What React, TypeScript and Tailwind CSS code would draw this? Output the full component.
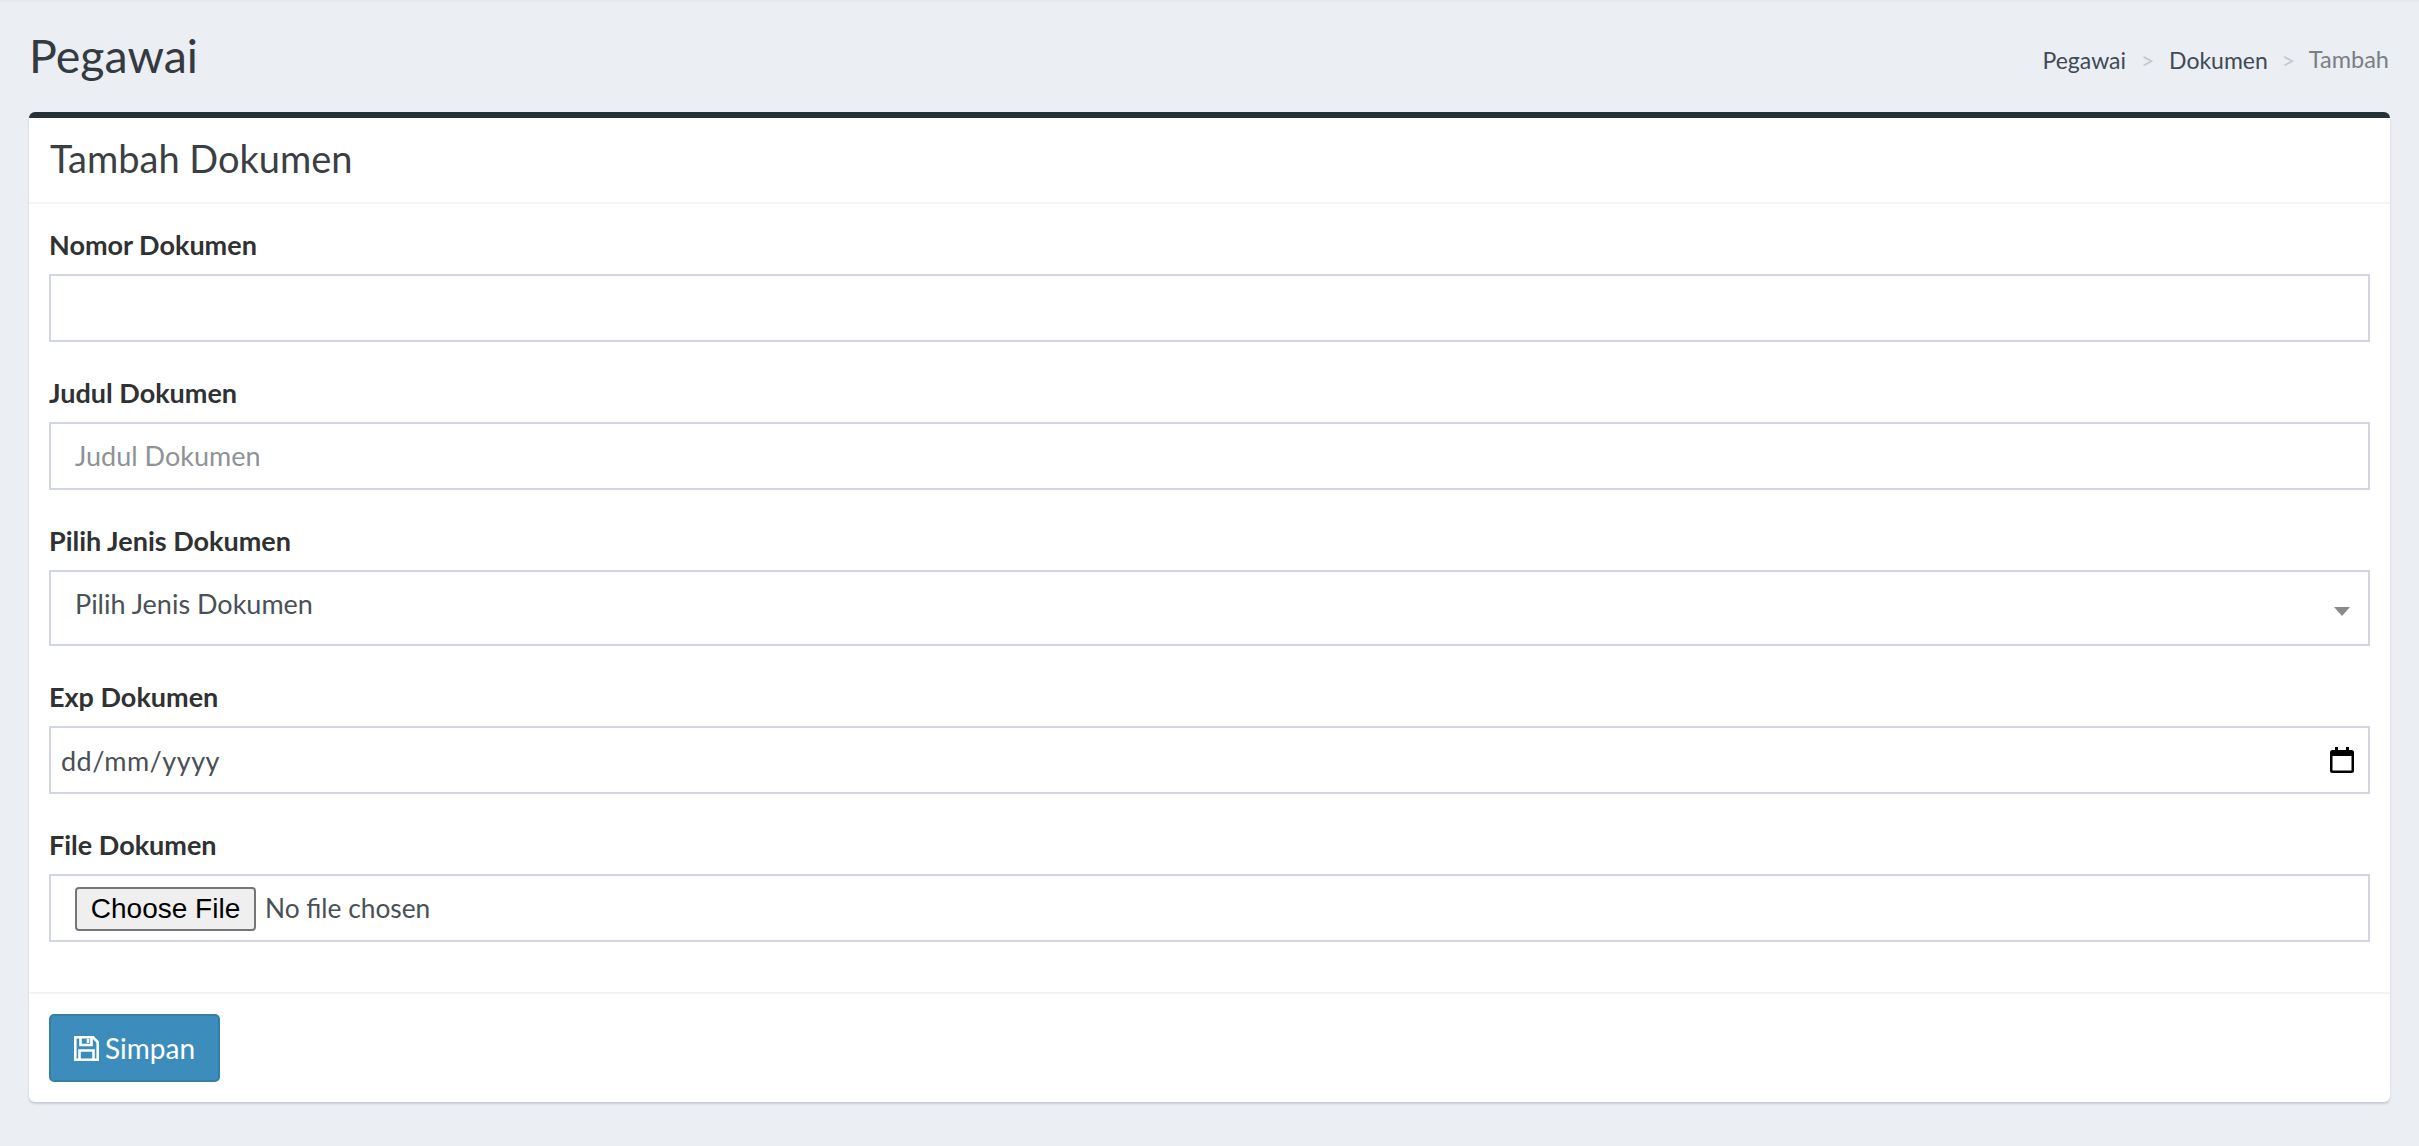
const fieldBox = 'w-full border-2 border-[#d2d6e0] bg-white'

function Label({ children }: { children: string }) {
  return <label className="block h-[36px] text-[27px] leading-[33px] font-bold text-[#2f3133]">{children}</label>
}

function SaveIcon() {
  return (
    <svg width="25" height="25" viewBox="0 0 25 25" fill="none" stroke="currentColor" strokeWidth="2.600">
      <path d="M1.300 1.300H19L23.700 6V23.700H1.300Z" />
      <path d="M6.500 1.300V9H17.500V1.300" />
      <path d="M14 3V7" />
      <path d="M5.500 23.700V14.500H19.500V23.700" />
    </svg>
  )
}

export default function App() {
  return (
    <div className="min-h-[1146px] bg-[#ebeef3] font-['Lato','Liberation_Sans',sans-serif]">
      <div className="h-[2px] bg-[#e6e8ec]" />
      <div className="px-[29px]">
        {/* Page heading */}
        <div className="flex h-[110px] items-center justify-between pb-[4px]">
          <h1 className="text-[46.500px] leading-none font-normal text-[#343a40]">Pegawai</h1>
          <ol className="flex items-center pt-[10px] pr-[1px] text-[23px] text-[#3f4a56]">
            <li>Pegawai</li>
            <li className="w-[43px] text-center text-[#c4c7cb]">&gt;</li>
            <li>Dokumen</li>
            <li className="w-[41px] text-center text-[#c4c7cb]">&gt;</li>
            <li className="text-[23.500px] text-[#7a7f85]">Tambah</li>
          </ol>
        </div>

        {/* Card */}
        <div className="h-[990px] rounded-[6px] border-t-[6px] border-[#263238] bg-white shadow-[0_2px_2px_rgba(120,130,150,0.3)]">
          <div className="flex h-[86px] items-center border-b-2 border-[#f3f4f6] px-[21px] pb-[4px]">
            <h3 className="text-[38px] leading-none font-normal text-[#3b3f44]">Tambah Dokumen</h3>
          </div>

          <form className="px-[20px] pt-[24px]">
            <Label>Nomor Dokumen</Label>
            <div className={`${fieldBox} mt-[10px] h-[68px]`} />

            <div className="mt-[34px]">
              <Label>Judul Dokumen</Label>
              <div className={`${fieldBox} mt-[10px] flex h-[68px] items-center px-[24px] text-[27px] text-[#8e9297]`}>Judul Dokumen</div>
            </div>

            <div className="mt-[34px]">
              <Label>Pilih Jenis Dokumen</Label>
              <div className={`${fieldBox} mt-[10px] flex h-[76px] items-center justify-between pb-[7px] pl-[24px] pr-[18px] text-[27px] text-[#495057]`}>
                <span>Pilih Jenis Dokumen</span>
                <span className="mt-[14px] h-0 w-0 border-x-[8px] border-t-[9px] border-x-transparent border-t-[#8a8a8a]" />
              </div>
            </div>

            <div className="mt-[34px]">
              <Label>Exp Dokumen</Label>
              <div className={`${fieldBox} mt-[10px] flex h-[68px] items-center justify-between pl-[10px] pr-[14px] text-[27px] tracking-[0.5px] text-[#495057]`}>
                <span className="pt-[2px]">dd/mm/yyyy</span>
                <svg width="24" height="26" viewBox="0 0 24 26">
                  <path d="M5 0h3v3h8V0h3v3h2.500A2.500 2.500 0 0 1 24 5.500v18a2.500 2.500 0 0 1-2.500 2.500h-19A2.500 2.500 0 0 1 0 23.500v-18A2.500 2.500 0 0 1 2.500 3H5z" fill="#000" />
                  <rect x="2.500" y="9" width="19" height="14.500" fill="#fff" />
                </svg>
              </div>
            </div>

            <div className="mt-[34px]">
              <Label>File Dokumen</Label>
              <div className={`${fieldBox} mt-[10px] flex h-[68px] items-center pl-[24px] text-[26.300px] text-[#495057]`}>
                <button type="button" className="mt-[2px] h-[44px] w-[181px] rounded-[4px] border-2 border-[#767676] bg-[#efefef] font-['Liberation_Sans',sans-serif] text-[28px] leading-none text-black">Choose File</button>
                <span className="ml-[9px] pt-[2px]">No file chosen</span>
              </div>
            </div>
          </form>

          <div className="mt-[50px] border-t-2 border-[#f3f4f6] px-[20px] pt-[20px]">
            <button type="button" className="flex h-[68px] w-[171px] items-center justify-center gap-[6px] rounded-[5px] border-2 border-[#367fa9] bg-[#3c8dbc] text-[28px] text-white">
              <SaveIcon />
              <span>Simpan</span>
            </button>
          </div>
        </div>
      </div>
    </div>
  )
}
